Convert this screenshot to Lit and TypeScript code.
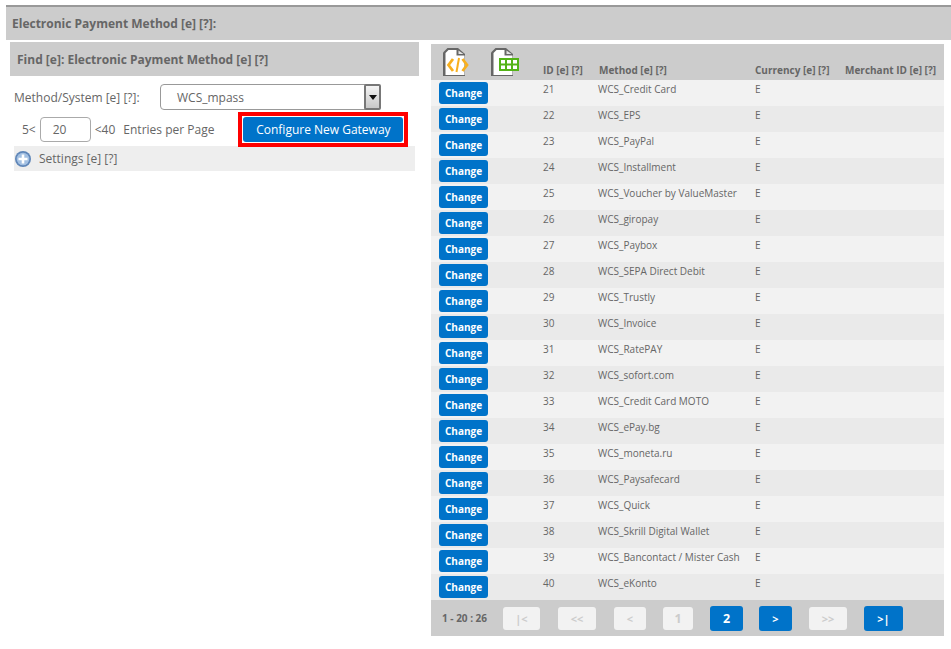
import { LitElement, html, css, svg } from "lit";
import { customElement } from "lit/decorators.js";

const METHODS = ["Credit Card","EPS","PayPal","Installment","Voucher by ValueMaster","giropay","Paybox","SEPA Direct Debit","Trustly","Invoice","RatePAY","sofort.com","Credit Card MOTO","ePay.bg","moneta.ru","Paysafecard","Quick","Skrill Digital Wallet","Bancontact / Mister Cash","eKonto"];

const docBase = svg`<path d="M4.5 0 H15 L22 6 V28 H0 V4.5 Z" fill="#666"/><path d="M5.5 2 H13.5 V7.5 H21.5 V27 H2.5 V5 Z" fill="#fff"/><path d="M15.5 2.5 L20.5 6 H15.5 Z" fill="#e4e4e4"/>`;

@customElement("app-root")
export class AppRoot extends LitElement {
  static styles = css`
    :host { display: block; width: 951px; height: 649px; background: #fff; font-family: "Open Sans", sans-serif; color: #666; overflow: hidden; }
    .page { padding: 5px 0 0 6px; }
    .title { height: 33px; background: #ccc; border-top: 2px solid #999; display: flex; align-items: center; padding-left: 6px; font-size: 12px; font-weight: 700; color: #666; }
    .cols { display: flex; margin-top: 2px; }
    .left { width: 409px; margin-left: 4px; flex: none; }
    .right { width: 513px; margin-left: 12px; margin-top: 2px; flex: none; }
    .find { height: 34px; background: #ccc; display: flex; align-items: center; padding-left: 7px; font-size: 12px; font-weight: 700; color: #666; }
    .method { display: flex; align-items: flex-start; margin: 8px 0 0 4px; height: 27px; font-size: 12px; }
    .method .lbl { width: 146px; line-height: 27px; }
    .select { width: 221px; height: 26px; box-sizing: border-box; border: 1px solid #999; border-radius: 4px; display: flex; align-items: center; justify-content: space-between; padding-left: 16px; font-size: 12px; background: #fff; }
    .arrow { width: 17px; height: 26px; margin: 0 -1px 0 0; box-sizing: border-box; border: 2px solid #777; border-radius: 2px; background: linear-gradient(#f4f4f4, #c8c8c8); display: flex; align-items: center; justify-content: center; }
    .arrow i { display: block; border: 4px solid transparent; border-top: 5px solid #111; border-bottom: 0; }
    .entries { display: flex; align-items: center; margin: 1px 0 0 12px; height: 35px; font-size: 12px; }
    .num { width: 51px; height: 25px; box-sizing: border-box; border: 1px solid #aaa; border-radius: 4px; display: flex; align-items: center; padding-left: 12px; margin: 0 4px 0 4px; }
    .epp { margin-left: 8px; }
    .cfgwrap { margin-left: 24px; border: 4px solid #f00; padding: 1px; display: flex; position: relative; z-index: 1; }
    .cfg { width: 160px; height: 25px; background: #0073c9; color: #fff; border-radius: 3px; display: flex; align-items: center; justify-content: center; font-size: 12px; }
    .settings { display: flex; align-items: center; height: 25px; background: #eee; margin: -1px 4px 0 4px; font-size: 12px; gap: 8px; padding-left: 1px; }
    .settings svg { display: block; }
    .thead { height: 36px; background: #ccc; display: grid; grid-template-columns: 112px 56px 156px 90px 1fr; align-items: end; font-size: 10px; font-weight: 700; color: #666; }
    .thead span { padding-bottom: 4px; line-height: 12px; white-space: nowrap; }
    .icons { display: flex; align-items: flex-start; gap: 20px; padding: 4px 0 0 12px; align-self: start; height: 32px; box-sizing: border-box; }
    .icons svg { display: block; overflow: visible; }
    .row { height: 26px; display: grid; grid-template-columns: 112px 55px 157px 90px 1fr; font-size: 10px; color: #666; line-height: 13px; }
    .row:nth-child(odd) { background: #f2f2f2; }
    .row:nth-child(even) { background: #eaeaea; }
    .row > div:not(.c0) { padding-top: 3px; white-space: nowrap; }
    .c0 { padding: 2px 0 0 8px; }
    .chg { width: 49px; height: 22px; background: #0073c9; color: #fff; font-weight: 700; font-size: 10px; border-radius: 3px; display: flex; align-items: center; justify-content: center; }
    .foot { height: 36px; background: #ccc; display: flex; align-items: center; font-size: 10px; }
    .count { font-weight: 700; width: 72px; padding-left: 11px; box-sizing: border-box; color: #666; }
    .pg { height: 23px; box-sizing: border-box; border-radius: 3px; display: flex; align-items: center; justify-content: center; font-size: 11px; font-weight: 700; }
    .digit { font-size: 12.5px; }
    .off { background: #f2f2f2; color: #ccc; }
    .on { background: #0073c9; color: #fff; height: 25px; }
  `;

  private pg(t: string, w: number, ml: number, on = false) {
    const digit = t === "1" || t === "2";
    return html`<div class="pg ${on ? "on" : "off"} ${digit ? "digit" : ""}" style="width:${w}px;margin-left:${ml}px">${t}</div>`;
  }

  render() {
    return html`<div class="page">
      <div class="title">Electronic Payment Method [e] [?]:</div>
      <div class="cols">
        <div class="left">
          <div class="find">Find [e]: Electronic Payment Method [e] [?]</div>
          <div class="method"><div class="lbl">Method/System [e] [?]:</div>
            <div class="select"><span>WCS_mpass</span><div class="arrow"><i></i></div></div></div>
          <div class="entries"><span>5&lt;</span><div class="num">20</div><span>&lt;40</span><span class="epp">Entries per Page</span>
            <div class="cfgwrap"><div class="cfg">Configure New Gateway</div></div></div>
          <div class="settings">
            <svg width="16" height="16" viewBox="0 0 16 16"><circle cx="8" cy="8" r="8" fill="#5f86b8"/><circle cx="8" cy="8" r="6.3" fill="#a3c0e2"/><path d="M8 3.5 V12.5 M3.5 8 H12.5" stroke="#fff" stroke-width="2.6"/></svg>
            <span>Settings [e] [?]</span></div>
        </div>
        <div class="right">
          <div class="thead">
            <div class="icons">
              <svg width="28" height="28" viewBox="0 0 28 28">${docBase}<path d="M10 11 L5.5 17 L10 23 M19.5 11 L24 17 L19.5 23" fill="none" stroke="#f8b01f" stroke-width="2.8"/><path d="M16 10 L13.5 24" stroke="#f8b01f" stroke-width="2"/></svg>
              <svg width="28" height="28" viewBox="0 0 28 28">${docBase}<rect x="8" y="10" width="20" height="13" fill="#53b317"/><path d="M10 12 H14 V15.5 H10 Z M16 12 H20 V15.5 H16 Z M22 12 H26 V15.5 H22 Z M10 17.5 H14 V21 H10 Z M16 17.5 H20 V21 H16 Z M22 17.5 H26 V21 H22 Z" fill="#fff"/></svg>
            </div>
            <span>ID [e] [?]</span><span>Method [e] [?]</span><span>Currency [e] [?]</span><span>Merchant ID [e] [?]</span>
          </div>
          <div>
            ${METHODS.map((m, i) => html`<div class="row"><div class="c0"><div class="chg">Change</div></div><div>${21 + i}</div><div>WCS_${m}</div><div>E</div><div></div></div>`)}
          </div>
          <div class="foot"><div class="count">1 - 20 : 26</div>
            ${this.pg("|<", 37, 0)}${this.pg("<<", 38, 18)}${this.pg("<", 32, 18)}${this.pg("1", 30, 17)}${this.pg("2", 33, 17, true)}${this.pg(">", 33, 16, true)}${this.pg(">>", 38, 17)}${this.pg(">|", 39, 17, true)}
          </div>
        </div>
      </div>
    </div>`;
  }
}
